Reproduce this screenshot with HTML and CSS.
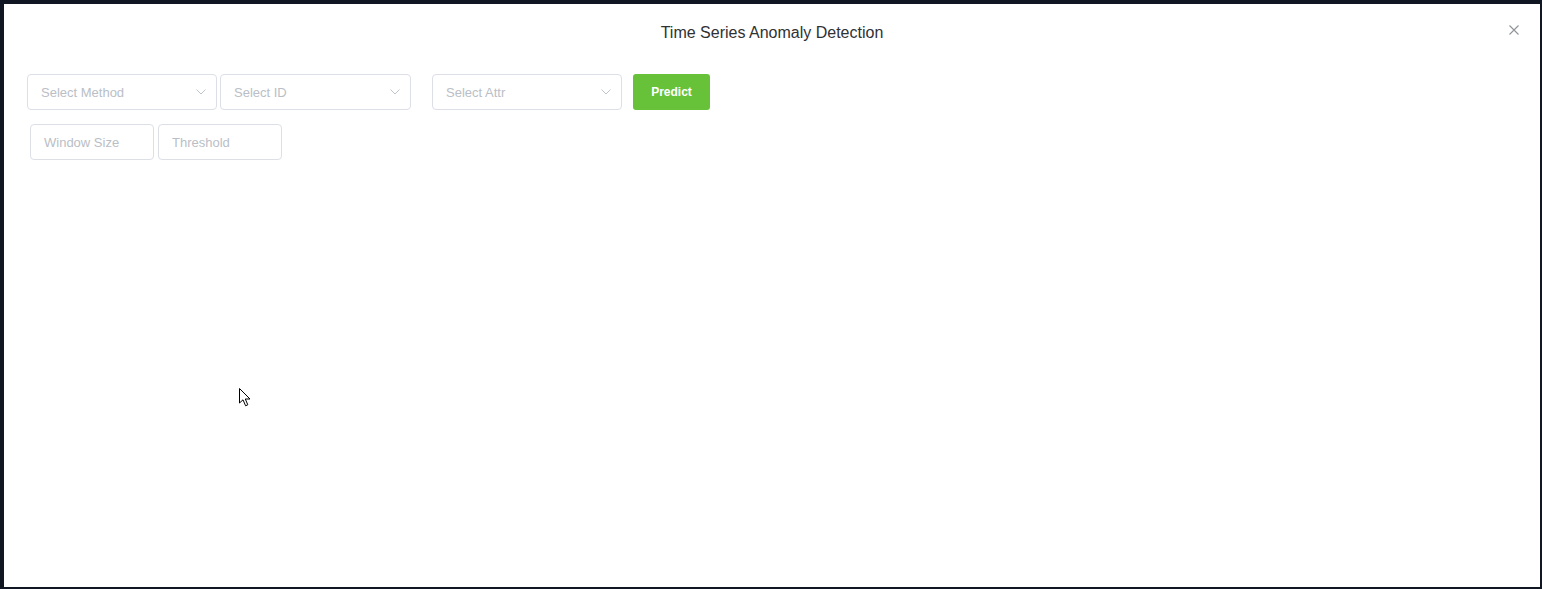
FILE: index.html
```html
<!DOCTYPE html>
<html lang="en">

<head>
    <meta charset="UTF-8">
    <meta name="viewport" content="width=device-width, initial-scale=1.0">
    <title>Time Series Anomaly Detection</title>
    <link rel="stylesheet" href="styles.css">
</head>

<body>
    <div class="dialog">
        <div class="dialog-header">
            <span class="dialog-title">Time Series Anomaly Detection</span>
            <button class="dialog-close" aria-label="Close">
                <svg width="10" height="10" viewBox="0 0 10 10">
                    <path d="M0.5 0.5 L9.5 9.5 M9.5 0.5 L0.5 9.5" stroke="#909399" stroke-width="1.1" fill="none"/>
                </svg>
            </button>
        </div>

        <div class="dialog-body">
            <div class="row">
                <div class="select select-method">
                    <input type="text" readonly placeholder="Select Method">
                    <svg class="arrow" width="10" height="6" viewBox="0 0 10 6">
                        <polyline points="0.5,0.5 5,5 9.5,0.5" stroke="#c0c4cc" stroke-width="1" fill="none"/>
                    </svg>
                </div>
                <div class="select select-id">
                    <input type="text" readonly placeholder="Select ID">
                    <svg class="arrow" width="10" height="6" viewBox="0 0 10 6">
                        <polyline points="0.5,0.5 5,5 9.5,0.5" stroke="#c0c4cc" stroke-width="1" fill="none"/>
                    </svg>
                </div>
                <div class="select select-attr">
                    <input type="text" readonly placeholder="Select Attr">
                    <svg class="arrow" width="10" height="6" viewBox="0 0 10 6">
                        <polyline points="0.5,0.5 5,5 9.5,0.5" stroke="#c0c4cc" stroke-width="1" fill="none"/>
                    </svg>
                </div>
                <button class="btn-predict">Predict</button>
            </div>

            <div class="row row-params">
                <input class="param" type="text" placeholder="Window Size">
                <input class="param" type="text" placeholder="Threshold">
            </div>
        </div>

        <!-- puntero del raton que sale en la captura -->
        <svg class="cursor" width="12" height="19" viewBox="0 0 12 19">
            <path d="M0.5 0.5 L0.5 15 L4 11.8 L6.6 17.8 L8.8 16.8 L6.3 11 L11 11 Z" fill="#fff" stroke="#000" stroke-width="1"/>
        </svg>
    </div>
</body>

</html>
```

FILE: styles.css
```css
body {
    margin: 0;
    background-color: #101722;
    font-family: "Liberation Sans", Arial, sans-serif;
}

.dialog {
    position: relative;
    width: 1536px;
    height: 583px;
    margin: 4px 0 0 4px;
    background: #fff;
}

.dialog-header {
    padding: 17px 20px 15px;
    text-align: center;
}

.dialog-title {
    font-size: 16px;
    line-height: 24px;
    color: #303133;
}

.dialog-close {
    position: absolute;
    top: 21px;
    right: 21px;
    width: 10px;
    height: 10px;
    padding: 0;
    border: none;
    background: none;
    display: flex;
    cursor: pointer;
}

.dialog-body {
    padding: 14px 23px 0;
}

.row {
    display: flex;
    align-items: center;
}

.select {
    position: relative;
    height: 36px;
}

.select input,
.param {
    box-sizing: border-box;
    width: 100%;
    height: 36px;
    padding: 0 13px;
    border: 1px solid #dcdfe6;
    border-radius: 4px;
    font-family: inherit;
    font-size: 13px;
    color: #606266;
    outline: none;
    background: #fff;
}

.select input::placeholder,
.param::placeholder {
    color: #babec6;
}

.select .arrow {
    position: absolute;
    right: 11px;
    top: 15px;
}

.select-method {
    width: 190px;
}

.select-id {
    width: 191px;
    margin-left: 3px;
}

.select-attr {
    width: 190px;
    margin-left: 21px;
}

.btn-predict {
    width: 77px;
    height: 36px;
    margin-left: 11px;
    border: none;
    border-radius: 3px;
    background: #67c23a;
    color: #fff;
    font-family: inherit;
    font-size: 12px;
    font-weight: bold;
    cursor: pointer;
}

.row-params {
    margin-top: 14px;
    padding-left: 3px;
    gap: 4px;
}

.param {
    width: 124px;
}

.cursor {
    position: absolute;
    left: 235px;
    top: 384px;
}
```
